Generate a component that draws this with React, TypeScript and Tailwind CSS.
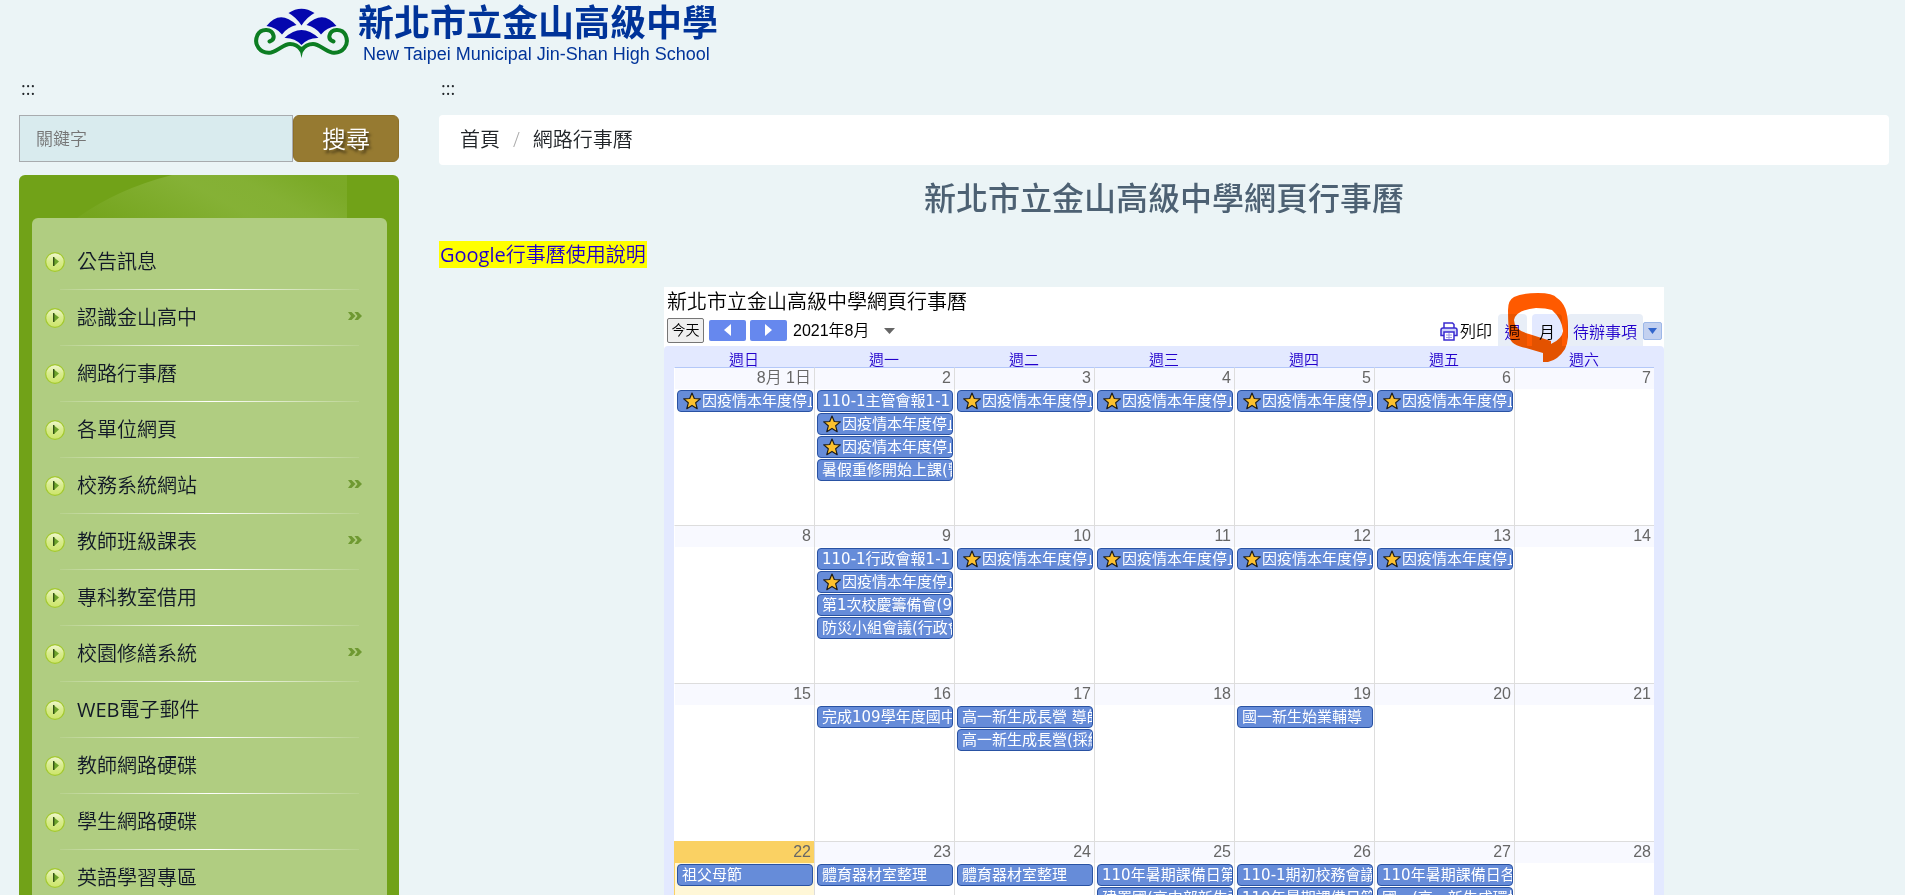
import clsx from "clsx";

type MenuItem = { latin?: string; name: string; sub?: boolean };
type Day = { label: string; events?: string[]; today?: boolean };

const STAR = "★";
const closed = STAR + "因疫情本年度停止辦理";

const menu: MenuItem[] = [
  { name: "公告訊息" },
  { name: "認識金山高中", sub: true },
  { name: "網路行事曆" },
  { name: "各單位網頁" },
  { name: "校務系統網站", sub: true },
  { name: "教師班級課表", sub: true },
  { name: "專科教室借用" },
  { name: "校園修繕系統", sub: true },
  { latin: "WEB", name: "電子郵件" },
  { name: "教師網路硬碟" },
  { name: "學生網路硬碟" },
  { name: "英語學習專區" },
];

const weekdays = ["週日", "週一", "週二", "週三", "週四", "週五", "週六"];

const weeks: Day[][] = [
  [
    { label: "8月 1日", events: [closed] },
    { label: "2", events: ["110-1主管會報1-1", closed, closed, "暑假重修開始上課(暫定)"] },
    { label: "3", events: [closed] },
    { label: "4", events: [closed] },
    { label: "5", events: [closed] },
    { label: "6", events: [closed] },
    { label: "7" },
  ],
  [
    { label: "8" },
    { label: "9", events: ["110-1行政會報1-1", closed, "第1次校慶籌備會(9:00)", "防災小組會議(行政會報)"] },
    { label: "10", events: [closed] },
    { label: "11", events: [closed] },
    { label: "12", events: [closed] },
    { label: "13", events: [closed] },
    { label: "14" },
  ],
  [
    { label: "15" },
    { label: "16", events: ["完成109學年度國中"] },
    { label: "17", events: ["高一新生成長營 導師", "高一新生成長營(採線上)"] },
    { label: "18" },
    { label: "19", events: ["國一新生始業輔導"] },
    { label: "20" },
    { label: "21" },
  ],
  [
    { label: "22", events: ["祖父母節"], today: true },
    { label: "23", events: ["體育器材室整理"] },
    { label: "24", events: ["體育器材室整理"] },
    { label: "25", events: ["110年暑期課備日第一天", "建置國(高中部新生資料"] },
    { label: "26", events: ["110-1期初校務會議", "110年暑期課備日第二天"] },
    { label: "27", events: ["110年暑期課備日各科", "國一(高一新生成環境"] },
    { label: "28" },
  ],
];

const SchoolLogo = () => (
  <svg viewBox="0 0 96 52" className="w-24 h-[52px] shrink-0" aria-hidden="true">
    <g fill="#0507ae">
      <path d="M34.500 5 Q47.500 -3.500 60.500 5 Q53 9 47.500 17.500 Q42 9 34.500 5Z" />
      <path d="M12.500 18 Q26 1 42.500 17 Q34 18.500 28 26.500 Q22 19 12.500 18Z" />
      <path d="M82.500 18 Q69 1 52.500 17 Q61 18.500 67 26.500 Q73 19 82.500 18Z" />
      <path d="M30.500 30 Q47.500 14 64.500 30 Q54.500 29.500 47.500 37 Q40.500 29.500 30.500 30Z" />
    </g>
    <g fill="none" stroke="#0c7d22" strokeWidth="4" strokeLinecap="round">
      <path d="M15.500 33.500 Q20.500 32 19.500 27.500 C18 20.500 7 20 3.500 27 C-1 37 6.500 46 17 44.500 C25 43 29 36 36 36 Q43 36 47 42" />
      <path d="M79.500 33.500 Q74.500 32 75.500 27.500 C77 20.500 88 20 91.500 27 C96 37 88.500 46 78 44.500 C70 43 66 36 59 36 Q52 36 48 42" />
    </g>
    <path d="M44.500 40.500 L47.500 38.500 L50.500 40.500 Q48.500 44 47.500 50 Q46.500 44 44.500 40.500Z" fill="#0c7d22" />
  </svg>
);

const Bullet = () => (
  <svg viewBox="0 0 20 20" className="size-5 shrink-0" aria-hidden="true">
    <defs>
      <linearGradient id="bullet" x1="0" y1="0" x2="0" y2="1">
        <stop offset="0" stopColor="#f0f7cf" />
        <stop offset="0.45" stopColor="#d9ec90" />
        <stop offset="1" stopColor="#cde56a" />
      </linearGradient>
    </defs>
    <circle cx="10" cy="10" r="9.300" fill="url(#bullet)" stroke="#a3c92f" strokeWidth="1.200" />
    <path d="M9 5.500 L14 9.500 L9 14Z" fill="#6da32a" />
    <path d="M8.700 5v9" stroke="#2c4a12" strokeWidth="1.300" />
  </svg>
);

const DoubleChevron = () => (
  <svg viewBox="0 0 14 8" className="w-[14px] h-2 mb-1" fill="#6f9932" aria-hidden="true">
    <path d="M0 0h3.500L7.500 4 3.500 8H0l3-4z" />
    <path d="M6.500 0H10l4 4-4 4H6.500l3-4z" />
  </svg>
);

const StarIcon = () => (
  <svg viewBox="0 0 20 20" className="size-5 shrink-0" aria-hidden="true">
    <path
      d="M10 2l2.300 5.500 6 .4-4.600 3.900 1.500 5.900-5.200-3.300-5.200 3.300 1.500-5.900L1.700 7.900l6-.4z"
      fill="#fdc12e"
      stroke="#1d1d1d"
      strokeWidth="1.200"
      strokeLinejoin="round"
    />
  </svg>
);

const PrinterIcon = () => (
  <svg viewBox="0 0 18 19" className="w-[18px] h-[19px]" fill="none" stroke="#3a2bd0" strokeWidth="1.500" aria-hidden="true">
    <path d="M4 6V1h8.500L14 2.500V6" fill="#fff" />
    <path d="M4 13.500H1V8q0-2 2-2h12q2 0 2 2v5.500h-3" fill="#cfd3fa" />
    <path d="M4 10h10v8H4z" fill="#fff" />
    <path d="M6 13h6M6 15.500h6M9 11v6" stroke="#9a98e6" strokeWidth="1" />
  </svg>
);

const EventChip = ({ text }: { text: string }) => {
  const starred = text.startsWith(STAR);
  return (
    <a
      href="#event"
      className="flex h-[22px] items-center overflow-hidden rounded-sm border border-[#2952a3] bg-[#668cd9] pl-1 text-[15px] leading-5 whitespace-nowrap text-white"
    >
      {starred && <StarIcon />}
      <span>{starred ? text.slice(1) : text}</span>
    </a>
  );
};

const Sidebar = () => (
  <aside className="w-[380px] shrink-0">
    <a href="#left" className="block h-[37px] leading-5 pl-0.5 text-lg">:::</a>

    <form className="flex h-[47px] mb-[13px]">
      <input
        type="text"
        aria-label="關鍵字"
        placeholder="關鍵字"
        className="flex-1 min-w-0 border border-[#a8abae] bg-[#d9ebee] px-4 text-[17px] font-[350] placeholder:text-[#757575] outline-none"
      />
      <button
        type="button"
        className="w-[106px] rounded-md border border-[#8d7029] bg-[#967a31] text-2xl font-[350] text-white [text-shadow:2px_3px_3px_rgba(0,0,0,0.6)]"
      >
        搜尋
      </button>
    </form>

    {/* Menu panel */}
    <div className="relative overflow-hidden rounded-t-md bg-[#71a218] pl-[13px] pr-3 pt-[43px]">
      <svg viewBox="0 0 270 43" className="absolute top-0 left-[58px] w-[270px] h-[43px]" aria-hidden="true">
        <defs>
          <linearGradient id="swoosh" x1="0" y1="0.8" x2="1" y2="0.5">
            <stop offset="0" stopColor="#8ab53d" stopOpacity="0.15" />
            <stop offset="0.55" stopColor="#8ab53d" stopOpacity="0.8" />
            <stop offset="0.75" stopColor="#8ab53d" stopOpacity="0.75" />
            <stop offset="1" stopColor="#8ab53d" stopOpacity="0.4" />
          </linearGradient>
        </defs>
        <path d="M0 43Q40 14 95 0H270V43Z" fill="url(#swoosh)" />
      </svg>
      <nav className="relative rounded-t-md bg-[#b0cd81] pt-4">
        <ul>
          {menu.map((item) => (
            <li key={item.name} className="relative">
              <a href="#menu" className="flex h-14 items-center pl-[13px] pr-[25px] text-xl font-[350] text-[#111827]">
                <Bullet />
                <span className="ml-3 flex-1">
                  {item.latin && <span className="font-normal">{item.latin}</span>}
                  {item.name}
                </span>
                {item.sub && <DoubleChevron />}
              </a>
              <span className="absolute bottom-0 left-7 right-7 h-px bg-gradient-to-r from-white/10 via-white to-white/10" />
            </li>
          ))}
        </ul>
      </nav>
    </div>
  </aside>
);

const Toolbar = () => (
  <div className="flex h-8 items-center pl-[3px]">
    <button type="button" className="h-[25px] w-[37px] rounded-xs border border-[#767676] bg-[#efefef] text-sm leading-5 font-[350]">
      今天
    </button>
    <button type="button" aria-label="上個月" className="ml-[5px] flex h-[21px] w-[37px] items-center justify-center rounded-xs bg-[#6688ee]">
      <svg viewBox="0 0 7 12" className="w-[7px] h-3" fill="#fff"><path d="M7 0v12L0 6z" /></svg>
    </button>
    <button type="button" aria-label="下個月" className="ml-1 flex h-[21px] w-[37px] items-center justify-center rounded-xs bg-[#6688ee]">
      <svg viewBox="0 0 7 12" className="w-[7px] h-3" fill="#fff"><path d="M0 0v12l7-6z" /></svg>
    </button>
    <button type="button" className="ml-1.5 flex items-center gap-[14px] pt-0.5 text-base font-[350] font-['Liberation_Sans','Noto_Sans_CJK_TC',sans-serif]">
      2021年8月
      <svg viewBox="0 0 11 6" className="w-[11px] h-1.5" fill="#666"><path d="M0 0h11L5.500 6z" /></svg>
    </button>

    <div className="relative ml-auto flex h-8 items-end pr-[2px]">
      <button type="button" className="flex h-8 items-center gap-0.5 pt-0.5 text-base font-[350]">
        <PrinterIcon />
        列印
      </button>
      <button type="button" className="ml-[6px] h-8 w-[29px] rounded-t bg-[#e8eef7] pt-1 text-base font-[350] text-[#2200cc]">
        週
      </button>
      <button type="button" className="ml-[5px] h-8 w-[30px] rounded-t bg-[#e3e9ff] pt-1 text-base font-[350]">
        月
      </button>
      <button type="button" className="ml-[5px] h-8 w-[76px] rounded-t bg-[#e8eef7] pt-1 text-base font-[350] text-[#2200cc]">
        待辦事項
      </button>
      <button type="button" aria-label="更多" className="mb-[6px] flex h-[18px] w-[19px] items-center justify-center rounded-xs border border-[#9db8e8] bg-[#c3d1f0]">
        <svg viewBox="0 0 9 6" className="w-[9px] h-1.5" fill="#3366cc"><path d="M0 0h9L4.500 6z" /></svg>
      </button>

      {/* hand-drawn ring round the month tab */}
      <svg
        viewBox="0 0 60 74"
        className="pointer-events-none absolute -top-[21px] right-[96px] w-[60px] h-[74px] mix-blend-multiply"
        fill="#ff5a00"
        fillRule="evenodd"
        aria-hidden="true"
      >
        <path d="M0 17Q0 7 6 4Q15 0 30 0Q45 0 49 5Q60 12 60 33Q61 48 57 56Q50 67 40 69H35V60L18 55Q3 52 2 45Q0 35 0 17ZM6 27Q6 37 21 41L43 48V51Q54 46 55 38Q54 26 44 17Q38 15 28 15Q8 17 6 27Z" />
      </svg>
    </div>
  </div>
);

const Calendar = () => (
  <section className="mx-auto mt-[19px] w-[1000px] max-w-full bg-white text-black">
    <h2 className="h-[27px] pl-[3px] text-xl leading-[30px] font-[350]">新北市立金山高級中學網頁行事曆</h2>
    <Toolbar />
    <div className="rounded-t-sm bg-[#e3e9ff] px-[10px] font-['Liberation_Sans','Noto_Sans_CJK_TC',sans-serif]">
      <table className="w-full table-fixed border-separate border-spacing-0 bg-white">
        <thead>
          <tr className="bg-[#e3e9ff]">
            {weekdays.map((day) => (
              <th key={day} className="p-0 pt-1.5 text-[15px] leading-[15px] font-[350] text-[#2200cc]">{day}</th>
            ))}
          </tr>
        </thead>
        <tbody>
          {weeks.map((week, w) => (
            <tr key={w}>
              {week.map((day, d) => (
                <td
                  key={day.label}
                  className={clsx(
                    "h-[158px] border-t border-l p-0 align-top",
                    w === 0 ? "border-t-[#b4c8f8]" : !day.today && "border-t-[#dddddd]",
                    !day.today && (d === 0 ? "border-l-transparent" : "border-l-[#dddddd]"),
                    day.today && "border-t-[#fad163] border-l-[#fad163] bg-[#fff7d7]"
                  )}
                >
                  <div
                    className={clsx(
                      "h-[21px] pr-[3px] text-right text-base leading-5 font-[350] text-[#666]",
                      day.today ? "bg-[#fad163]" : "bg-[#f8f9ff]"
                    )}
                  >
                    {day.label}
                  </div>
                  <div className="flex flex-col gap-px pt-px pl-0.5 pr-px font-['DejaVu_Sans','Noto_Sans_CJK_TC',sans-serif]">
                    {day.events?.map((text, i) => <EventChip key={i} text={text} />)}
                  </div>
                </td>
              ))}
            </tr>
          ))}
        </tbody>
      </table>
    </div>
  </section>
);

export default function App() {
  return (
    <div className="h-screen overflow-hidden bg-[#ebf4f6] text-[#212529] font-['Open_Sans','Noto_Sans_CJK_TC',sans-serif]">
      <header className="flex h-[78px] pl-[254px]">
        <a href="#home" className="flex text-[#003399]">
          <span className="pt-2"><SchoolLogo /></span>
          <span className="pl-2">
            <span className="block h-[42px] text-[36px] leading-10 font-bold whitespace-nowrap font-['Noto_Sans_CJK_TC',sans-serif]">新北市立金山高級中學</span>
            <span className="block pl-[5px] text-lg leading-6 whitespace-nowrap font-['Liberation_Sans',sans-serif]">
              New Taipei Municipal Jin-Shan High School
            </span>
          </span>
        </a>
      </header>

      <div className="flex gap-10 pl-[19px] pr-4">
        <Sidebar />
        <main className="min-w-0 flex-1">
          <a href="#center" className="block h-[37px] leading-5 pl-0.5 text-lg">:::</a>
          <nav className="flex h-[50px] items-center rounded bg-white px-[21px] text-xl font-[350]">
            <a href="#home">首頁</a>
            <span className="px-[13px] text-[#aaa]">/</span>
            <a href="#calendar">網路行事曆</a>
          </nav>
          <h1 className="mt-[9px] text-center text-[32px] leading-[48px] font-medium text-[#4d6173]">新北市立金山高級中學網頁行事曆</h1>
          <p className="mt-[19px] h-[27px] text-xl leading-[27px] font-[350]">
            <a href="#help" className="inline-block bg-[#ffff00] px-px text-[#2200cc]">
              <span className="font-normal">Google</span>行事曆使用說明
            </a>
          </p>
          <Calendar />
        </main>
      </div>
    </div>
  );
}
